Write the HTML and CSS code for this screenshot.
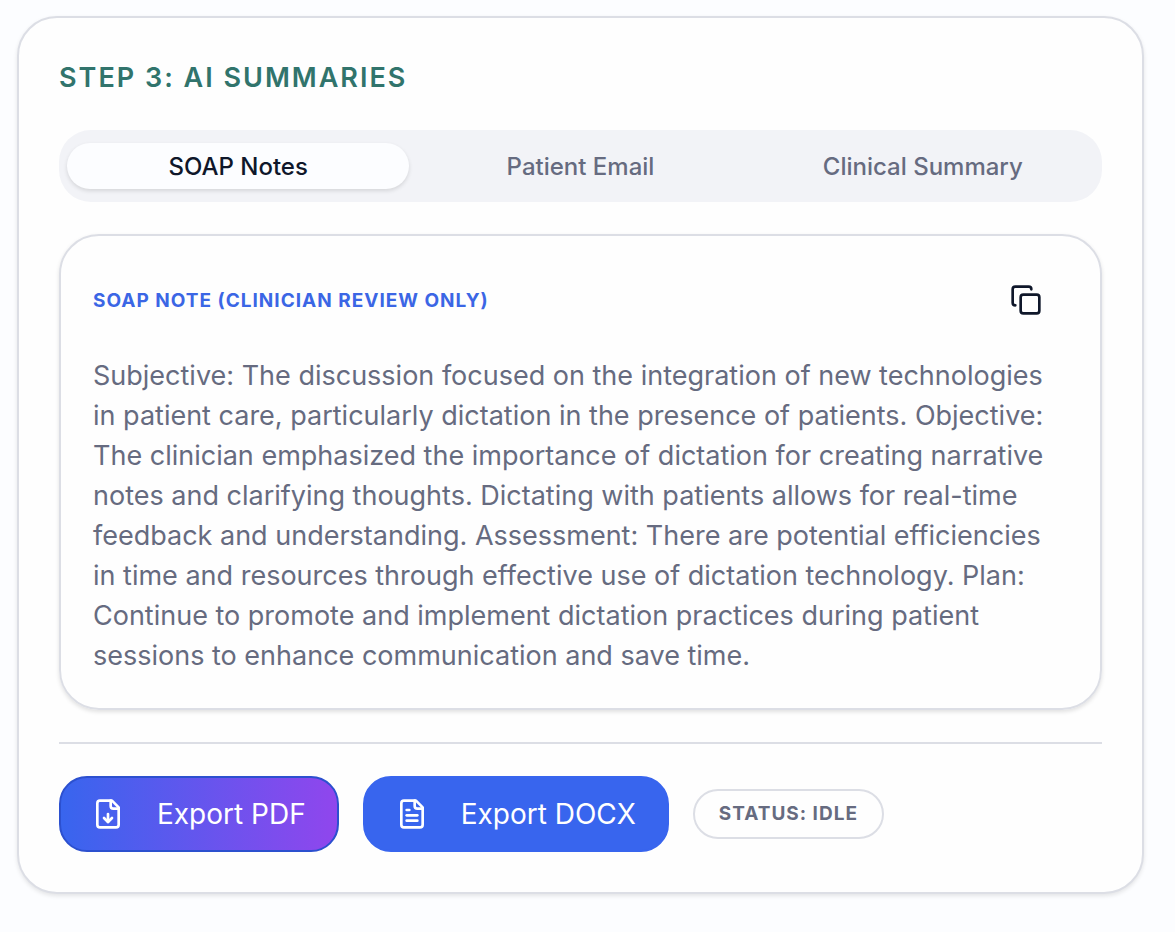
FILE: index.html
```html
<!DOCTYPE html>
<html lang="en">
  <head>
    <meta charset="utf-8">
    <meta name="viewport" content="width=device-width, initial-scale=1">
    <title>AI Summaries</title>
    <link rel="stylesheet" href="styles.css">
  </head>

  <body>
    <main class="card">
      <h1 class="card-title">Step 3: AI Summaries</h1>

      <div class="tabs" role="tablist">
        <button type="button" class="tab active" id="tab-soap" role="tab" aria-selected="true" aria-controls="panel-soap">SOAP Notes</button>
        <button type="button" class="tab" role="tab" aria-selected="false">Patient Email</button>
        <button type="button" class="tab" role="tab" aria-selected="false">Clinical Summary</button>
      </div>

      <section class="note" id="panel-soap" role="tabpanel" aria-labelledby="tab-soap">
        <header class="note-header">
          <h2 class="note-title">SOAP Note (Clinician review only)</h2>
          <button type="button" class="copy-button" aria-label="Copy note">
            <svg class="icon" viewBox="0 0 24 24">
              <rect x="8" y="8" width="14" height="14" rx="2" />
              <path d="M4 16c-1.1 0-2-.9-2-2V4c0-1.1.9-2 2-2h10c1.1 0 2 .9 2 2" />
            </svg>
          </button>
        </header>
        <p class="note-text">Subjective: The discussion focused on the integration of new technologies in patient care, particularly dictation in the presence of patients. Objective: The clinician emphasized the importance of dictation for creating narrative notes and clarifying thoughts. Dictating with patients allows for real-time feedback and understanding. Assessment: There are potential efficiencies in time and resources through effective use of dictation technology. Plan: Continue to promote and implement dictation practices during patient sessions to enhance communication and save time.</p>
      </section>

      <footer class="actions">
        <button type="button" class="button button-gradient">
          <svg class="icon" viewBox="0 0 24 24">
            <path d="M15 2H6a2 2 0 0 0-2 2v16a2 2 0 0 0 2 2h12a2 2 0 0 0 2-2V7Z" />
            <path d="M14 2v4a2 2 0 0 0 2 2h4" />
            <path d="M12 18v-6" />
            <path d="m9 15 3 3 3-3" />
          </svg>
          Export PDF
        </button>
        <button type="button" class="button">
          <svg class="icon" viewBox="0 0 24 24">
            <path d="M15 2H6a2 2 0 0 0-2 2v16a2 2 0 0 0 2 2h12a2 2 0 0 0 2-2V7Z" />
            <path d="M14 2v4a2 2 0 0 0 2 2h4" />
            <path d="M10 9H8" />
            <path d="M16 13H8" />
            <path d="M16 17H8" />
          </svg>
          Export DOCX
        </button>
        <span class="status">Status: idle</span>
      </footer>
    </main>
  </body>
</html>
```

FILE: styles.css
```css
* {
  box-sizing: border-box;
}

body {
  margin: 0;
  padding: 16px 31px 38px 17px;
  font-family: Inter, "Liberation Sans", sans-serif;
  color: #0f172a;
  background-color: #fcfdff;
}

h1, h2, p {
  margin: 0;
}

button {
  font-family: inherit;
  cursor: pointer;
}

.card {
  padding: 40px;
  border: 2px solid #dcdee5;
  border-radius: 40px;
  background-color: #fefefe;
  box-shadow: 0 2px 4px rgba(0, 0, 0, 0.1);
}

.card-title {
  font-size: 27px;
  line-height: 40px;
  font-weight: 600;
  letter-spacing: 2px;
  text-transform: uppercase;
  color: #31746c;
}

.tabs {
  display: flex;
  margin-top: 32px;
  padding: 13px 8px;
  border-radius: 32px;
  background-color: #f2f3f7;
}

.tab {
  flex: 1;
  height: 46px;
  padding: 0;
  border: 0;
  border-radius: 24px;
  font-size: 24px;
  font-weight: 500;
  color: #666b80;
  background: none;
}

.tab.active {
  color: #0f172a;
  background-color: #fcfdff;
  box-shadow: 0 2px 4px rgba(0, 0, 0, 0.12);
}

.note {
  margin-top: 32px;
  padding: 32px;
  border: 2px solid #dcdee5;
  border-radius: 40px;
  box-shadow: 0 2px 4px rgba(0, 0, 0, 0.12);
}

.note-header {
  display: flex;
  align-items: center;
  justify-content: space-between;
}

.note-title {
  font-size: 19px;
  font-weight: 700;
  letter-spacing: 1px;
  text-transform: uppercase;
  color: #3b66e5;
}

.icon {
  width: 32px;
  height: 32px;
  fill: none;
  stroke: currentColor;
  stroke-width: 2;
  stroke-linecap: round;
  stroke-linejoin: round;
}

.copy-button {
  display: flex;
  padding: 16px 26px;
  border: 0;
  color: #0f172a;
  background: none;
}

.note-text {
  margin-top: 24px;
  font-size: 27px;
  line-height: 40px;
  color: #666b80;
}

.actions {
  display: flex;
  flex-wrap: wrap;
  align-items: center;
  gap: 24px;
  margin-top: 32px;
  padding-top: 32px;
  border-top: 2px solid #dcdee5;
}

.button {
  display: flex;
  align-items: center;
  gap: 33px;
  height: 76px;
  padding: 0 31px;
  border: 2px solid #3865ee;
  border-radius: 28px;
  font-size: 28px;
  font-weight: 400;
  color: #fff;
  background-color: #3865ee;
}

.button-gradient {
  border-color: #2c50cf;
  background-image: linear-gradient(90deg, #3865ee, #9046ed);
}

.status {
  padding: 11px 24px;
  border: 2px solid #dcdee5;
  border-radius: 25px;
  font-size: 19px;
  line-height: 24px;
  font-weight: 700;
  letter-spacing: 1px;
  text-transform: uppercase;
  color: #666b80;
}
```
